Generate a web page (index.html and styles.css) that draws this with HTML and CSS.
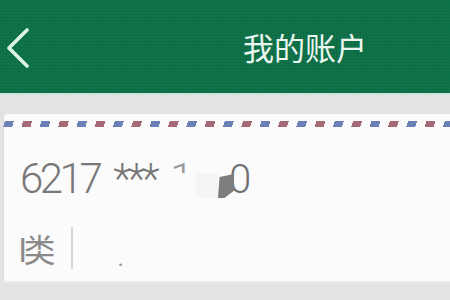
FILE: index.html
```html
<!DOCTYPE html>
<html lang="zh">
<head>
<meta charset="utf-8">
<link rel="stylesheet" href="styles.css">
</head>
<body>
<header class="topbar">
  <svg class="back" width="26" height="42" viewBox="0 0 26 42">
    <polyline points="22,4 4,22 22,40" fill="none" stroke="#dcf3e6" stroke-width="3.6" stroke-linecap="round" stroke-linejoin="round"/>
  </svg>
  <h1 class="title">我的账户</h1>
</header>
<main class="content">
  <section class="card">
    <div class="stripe"></div>
    <div class="number">
      <span class="digits">6217</span>
      <span class="stars">***</span>
      <span class="hidden-one">1</span>
      <span class="smudge"></span>
      <span class="blob"></span><span class="zero">0</span>
    </div>
    <div class="meta">
      <span class="type">I类</span>
      <span class="divider"></span>
      <span class="dot">.</span>
    </div>
  </section>
</main>
</body>
</html>
```
FILE: styles.css
```css
html, body {
  margin: 0;
  padding: 0;
}
body {
  width: 450px;
  height: 300px;
  overflow: hidden;
  background: #e3e3e3;
  font-family: Roboto, "Noto Sans CJK SC", sans-serif;
}
.topbar {
  height: 93px;
  display: flex;
  align-items: center;
  padding-left: 5px;
  background-color: #10744a;
  background-image:
    repeating-linear-gradient(90deg, rgba(0,0,0,0.05) 0 1px, transparent 1px 3px),
    repeating-linear-gradient(0deg, rgba(0,0,0,0.05) 0 1px, transparent 1px 3px);
  border-bottom: 2px solid #cfe6da;
  box-sizing: content-box;
}
.back {
  display: block;
  flex: none;
}
.title {
  margin: 0 0 0 212px;
  font-family: "Noto Sans CJK SC", sans-serif;
  font-weight: 400;
  font-size: 31px;
  line-height: 1;
  color: #e9f6ef;
}
.content {
  padding-top: 19px;
  padding-left: 3px;
}
.card {
  width: 470px;
  height: 167px;
  background: #fbfbfb;
  border-left: 1px solid #dedede;
  border-top-left-radius: 3px;
  box-sizing: border-box;
  padding-top: 7px;
  display: flex;
  flex-direction: column;
  box-shadow: 0 2px 0 #e9e9e9;
}
.stripe {
  height: 6px;
  background: repeating-linear-gradient(90deg,
    #6a80b7 0 9px, transparent 9px 18.33px,
    #a66a77 18.33px 27.33px, transparent 27.33px 36.66px);
  transform: skewX(-18deg);
}
.number {
  margin-top: 27px;
  padding-left: 16px;
  height: 50px;
  font-size: 42px;
  line-height: 50px;
  font-weight: 300;
  color: #787878;
  letter-spacing: -3.5px;
  display: flex;
  align-items: baseline;
  white-space: nowrap;
}
.stars {
  margin-left: 14px;
  color: #777;
}
.hidden-one {
  margin-left: 14px;
  color: #9a9a9a;
  clip-path: inset(0 0 62% 0);
}
.smudge {
  display: inline-block;
  width: 22px;
  height: 25px;
  margin-left: 6px;
  background: #f5f5f5;
  align-self: center;
  margin-top: 12px;
}
.blob {
  display: inline-block;
  width: 16px;
  height: 24px;
  background: #7d7d7d;
  clip-path: polygon(10% 12%, 100% 0, 100% 70%, 40% 100%, 0 100%);
  align-self: center;
  margin-top: 14px;
}
.zero {
  margin-left: -5px;
  font-size: 40px;
  letter-spacing: 0;
  color: #6f6f6f;
}
.meta {
  margin-top: 22px;
  padding-left: 14px;
  display: flex;
  align-items: center;
  height: 44px;
}
.type {
  font-family: "Noto Sans CJK SC", sans-serif;
  font-size: 32px;
  line-height: 44px;
  color: #8a8a8a;
  letter-spacing: -4px;
}
.divider {
  width: 2px;
  height: 42px;
  margin-left: 20px;
  background: #d6d6d6;
}
.dot {
  margin-left: 44px;
  margin-top: 20px;
  font-size: 24px;
  line-height: 1;
  color: #9a9a9a;
}
```
